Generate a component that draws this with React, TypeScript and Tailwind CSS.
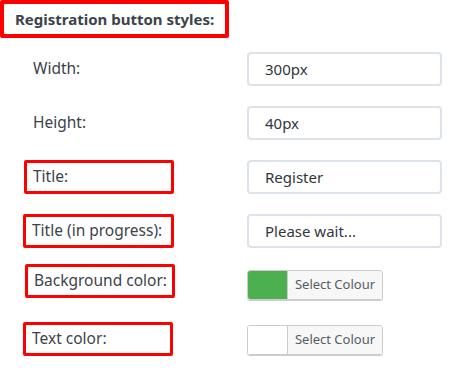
import React from 'react'

const font = { fontFamily: '"Noto Sans", "Open Sans", Arial, sans-serif' }

function Label({ text, boxed, className = '' }: { text: string; boxed?: boolean; className?: string }) {
  return (
    <div
      className={`w-[150px] h-[34px] flex items-center pl-[6px] border-[3px] rounded-[2px] text-[15.5px] text-[#3c434a] whitespace-nowrap ${
        boxed ? 'border-[#ff0000]' : 'border-transparent'
      } ${className}`}
    >
      {text}
    </div>
  )
}

function TextInput({ value }: { value: string }) {
  return (
    <div className="w-[195px] h-[34px] flex items-center pl-[16px] border-2 border-[#dde3ea] rounded-[4px] text-[15px] text-[#32373c]">
      {value}
    </div>
  )
}

function ColorPicker({ color }: { color: string }) {
  return (
    <div className="flex w-[136px] h-[30px] border border-[#cccccc] rounded-[3px] overflow-hidden shadow-[0_1px_0_#cccccc]">
      <div className="w-[39px] h-full" style={{ backgroundColor: color }} />
      <div className="flex-1 flex items-center justify-center border-l border-[#cccccc] bg-[#f7f7f7] text-[13px] text-[#555d66]">
        Select Colour
      </div>
    </div>
  )
}

export default function App() {
  return (
    <div className="w-[469px] h-[380px] bg-white" style={font}>
      <div className="w-[229px] h-[38px] flex items-center pl-[11px] border-4 border-[#ff0000] rounded-[2px] text-[15px] font-bold text-[#3c434a]">
        Registration button styles:
      </div>

      <div className="flex flex-col gap-[20px] pt-[14px] pl-[24px]">
        <div className="flex items-center h-[34px]">
          <Label text="Width:" />
          <div className="ml-[73px]"><TextInput value="300px" /></div>
        </div>
        <div className="flex items-center h-[34px]">
          <Label text="Height:" />
          <div className="ml-[73px]"><TextInput value="40px" /></div>
        </div>
        <div className="flex items-center h-[34px]">
          <Label text="Title:" boxed />
          <div className="ml-[73px]"><TextInput value="Register" /></div>
        </div>
        <div className="flex items-center h-[34px]">
          <Label text="Title (in progress):" boxed className="-ml-px w-[151px]" />
          <div className="ml-[73px]"><TextInput value="Please wait..." /></div>
        </div>
        <div className="flex items-center h-[34px]">
          <Label text="Background color:" boxed className="-mt-[8px] ml-px pl-[5px]" />
          <div className="ml-[72px]"><ColorPicker color="#4caf50" /></div>
        </div>
        <div className="flex items-center h-[34px]">
          <Label text="Text color:" boxed className="-ml-px" />
          <div className="ml-[74px] mt-[2px]"><ColorPicker color="#ffffff" /></div>
        </div>
      </div>
    </div>
  )
}
